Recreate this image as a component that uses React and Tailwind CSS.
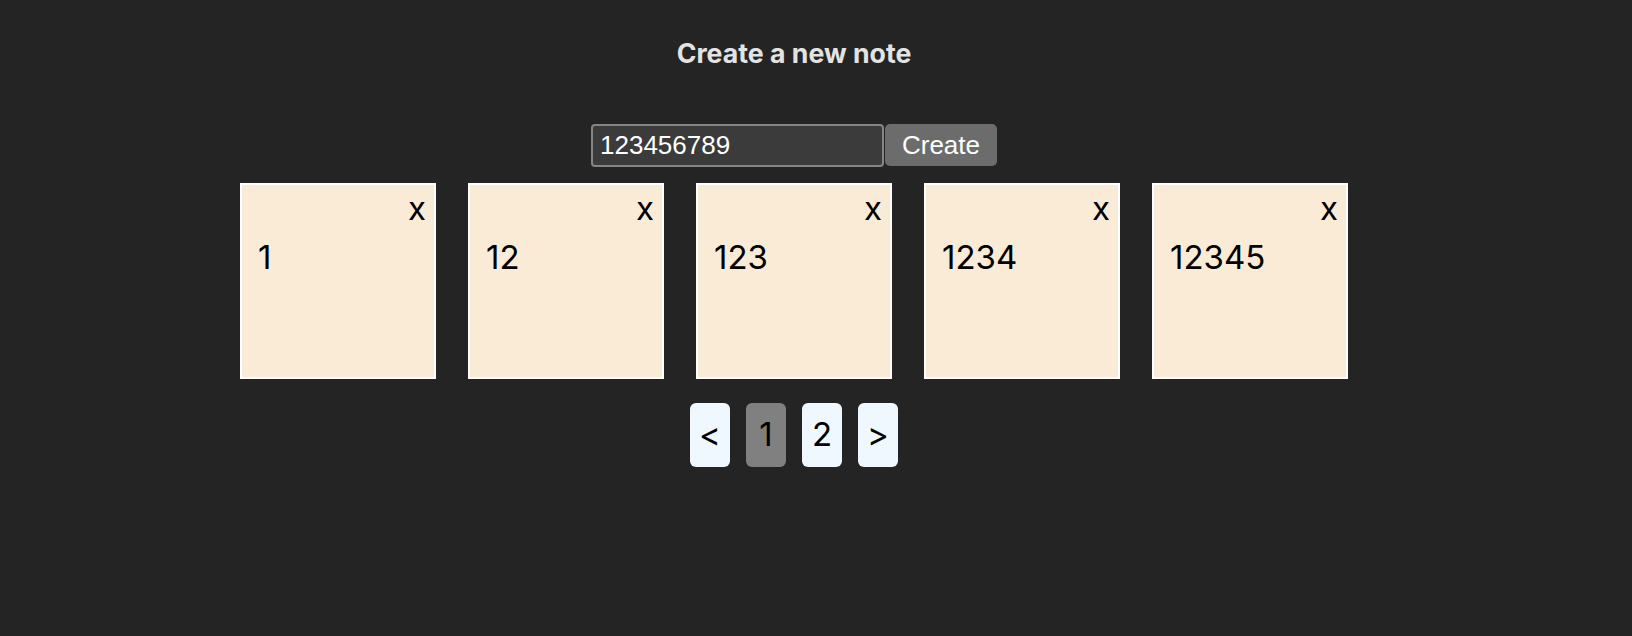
import { useState } from "react";

const notes = ["1", "12", "123", "1234", "12345"];

const NoteCard = ({ text }) => (
  <div className="w-[196px] h-[196px] border-2 border-white bg-[#faebd7] text-black flex flex-col pt-[4px] pl-[16px] pr-[8px] text-[33px] leading-[38px]">
    <div className="flex justify-end">
      <button className="cursor-pointer leading-[38px]">x</button>
    </div>
    <p className="mt-[11px]">{text}</p>
  </div>
);

const PageButton = ({ label, active }) => (
  <button
    className={
      "w-[40px] h-[64px] rounded-[6px] flex items-center justify-center text-[33px] text-black " +
      (active ? "bg-[#808080]" : "bg-[#f0f8ff]")
    }
  >
    {label}
  </button>
);

export default function App() {
  const [value, setValue] = useState("123456789");

  return (
    <div className="min-h-screen bg-[#242424] font-['Inter',sans-serif]">
      <div className="w-[1588px] flex flex-col items-center pt-[38px]">
        <h2 className="text-[26.7px] leading-[31px] font-bold text-[#e3e3e3]">Create a new note</h2>

        <div className="flex mt-[55px]">
          <input
            value={value}
            onChange={(e) => setValue(e.target.value)}
            className="w-[293px] h-[43px] rounded-[4px] border-2 border-[#858585] bg-[#3b3b3b] pl-[7px] pr-[8px] text-white text-[26px] font-['Liberation_Sans',Arial,sans-serif] outline-none"
          />
          <button className="ml-[1px] w-[112px] h-[42px] rounded-[5px] bg-[#6c6c6c] text-white text-[26px] font-['Liberation_Sans',Arial,sans-serif]">
            Create
          </button>
        </div>

        <div className="flex gap-[32px] mt-[16px]">
          {notes.map((n) => (
            <NoteCard key={n} text={n} />
          ))}
        </div>

        <div className="flex gap-[16px] mt-[24px]">
          <PageButton label="<" />
          <PageButton label="1" active />
          <PageButton label="2" />
          <PageButton label=">" />
        </div>
      </div>
    </div>
  );
}
